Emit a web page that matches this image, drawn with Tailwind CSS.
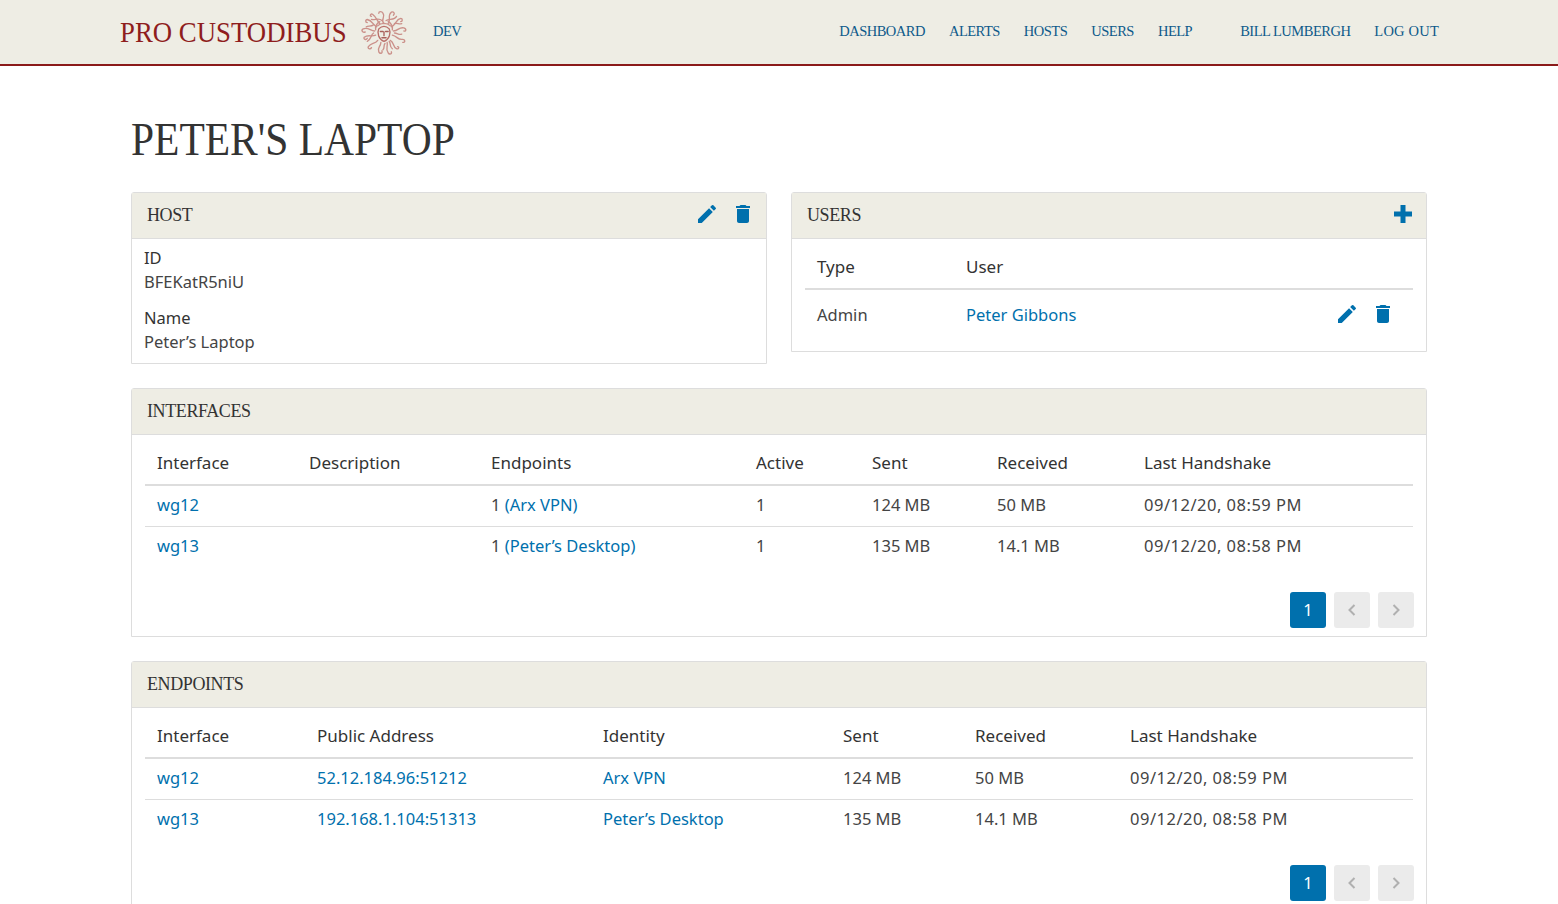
<!DOCTYPE html>
<html lang="en">
<head>
<meta charset="UTF-8" />
<title>Peter's Laptop</title>
<script src="https://cdn.jsdelivr.net/npm/@tailwindcss/browser@4"></script>
</head>
<body class="bg-white text-[#444] font-['Noto_Sans','Open_Sans',sans-serif] text-[16.5px] overflow-hidden h-[904px]">

<!-- Nav -->
<nav class="h-[66px] bg-[#eeede4] border-b-2 border-[#8b1a1a] flex items-center pl-[120px] pr-[119px] font-['Liberation_Serif',serif]">
  <a class="inline-block w-[226px] whitespace-nowrap origin-left scale-x-[0.893] text-[30px] text-[#8f1d1d] leading-none">PRO CUSTODIBUS</a>
  <svg class="ml-[14px] w-[48px] h-[48px]" viewBox="0 0 46 46" fill="none" stroke="#cb918a" stroke-width="1.3" stroke-linecap="round">
    <path d="M23 15C19 11 25 9 22 5C21 3 18 3 18 5" />
    <path d="M27 15C30 11 26 7 30 4C32 3 34 5 32 7" />
    <path d="M30 18C35 16 34 11 39 10C41 10 41 13 39 13" />
    <path d="M32 22C37 22 37 18 42 19C45 20 44 23 42 22" />
    <path d="M31 26C36 27 36 31 41 30C43 30 44 33 41 33" />
    <path d="M29 31C33 33 31 37 35 39C37 40 38 37 36 37" />
    <path d="M26 33C27 37 24 39 27 43C28 45 31 44 30 42" />
    <path d="M20 33C20 37 16 38 18 42C19 44 22 44 21 41" />
    <path d="M17 31C14 35 11 33 8 37C7 39 10 40 11 38" />
    <path d="M15 26C11 28 8 25 4 28C3 30 6 31 7 29" />
    <path d="M14 22C10 22 8 18 3 20C1 21 2 24 5 23" />
    <path d="M16 18C12 16 12 12 7 11C5 11 5 14 7 14" />
    <path d="M19 15C16 12 16 9 12 6C10 5 9 8 11 8" />
    <path d="M25 12C28 10 33 12 35 8M21 12C18 9 14 12 11 11M13 24C10 26 11 30 7 32M33 24C36 24 37 26 40 25M24 34C22 37 24 38 22 40M28 32C30 35 28 37 31 39M13 16C11 18 8 17 6 18M33 15C36 14 37 16 40 15" />
    <path d="M18 20C16 24 18 30 23 32C28 30 30 24 28 20C25 17 21 17 18 20Z" stroke="#b9706a" />
    <path d="M19.5 22.5h2.5M24.5 22.5h2.5M23 23v3.5M21 28.5h4" stroke="#a9605a" />
    <path d="M17 17C20 14 26 14 29 17M15 21C14 17 17 14 19 13M31 21C32 17 29 14 27 13" />
  </svg>
  <span class="ml-[25px] text-[#0d5a8a] text-[14.5px] tracking-[-0.5px]">DEV</span>
  <div class="ml-auto flex items-center gap-[24px] text-[#0d5a8a] text-[14.5px] tracking-[-0.5px]">
    <a>DASHBOARD</a><a>ALERTS</a><a>HOSTS</a><a>USERS</a><a>HELP</a>
    <a class="ml-[24px]">BILL LUMBERGH</a><a class="tracking-[0.2px]">LOG OUT</a>
  </div>
</nav>

<main class="px-[131px]">
  <h1 class="mt-[46px] mb-[24px] origin-left scale-x-[0.902] whitespace-nowrap text-[46px] leading-[56px] text-[#333] font-['Liberation_Serif',serif]">PETER'S LAPTOP</h1>

  <div class="grid grid-cols-2 gap-[24px] items-start mb-[24px]">
    <!-- Host -->
    <section class="border border-[#ddd] rounded-t-[3px]">
      <header class="h-[46px] pb-[1px] bg-[#eeede4] border-b border-[#ddd] flex items-center pl-[15px] pr-[11px] font-['Liberation_Serif',serif] text-[18px] tracking-[-0.4px] text-[#333]">HOST
        <span class="ml-auto flex gap-[12px] -mt-[2px]">
          <svg class="w-[24px] h-[24px]" viewBox="0 0 24 24" fill="#0070ad"><path d="M3 17.25V21h3.75L17.81 9.94l-3.75-3.75L3 17.25zM20.71 7.04a1 1 0 0 0 0-1.41l-2.34-2.34a1 1 0 0 0-1.41 0l-1.83 1.83 3.75 3.75 1.83-1.83z"/></svg>
          <svg class="w-[24px] h-[24px]" viewBox="0 0 24 24" fill="#0070ad"><path d="M6 19c0 1.1.9 2 2 2h8c1.1 0 2-.9 2-2V7H6v12zM19 4h-3.5l-1-1h-5l-1 1H5v2h14V4z"/></svg>
        </span>
      </header>
      <div class="px-[12px] pt-[6px] pb-[9px] leading-[25px]">
        <div class="text-[#333]">ID</div><div class="-mt-[1px]">BFEKatR5niU</div>
        <div class="text-[#333] mt-[11px]">Name</div><div class="-mt-[1px]">Peter’s Laptop</div>
      </div>
    </section>
    <!-- Users -->
    <section class="border border-[#ddd] rounded-t-[3px]">
      <header class="h-[46px] pb-[1px] bg-[#eeede4] border-b border-[#ddd] flex items-center pl-[15px] pr-[11px] font-['Liberation_Serif',serif] text-[18px] tracking-[-0.4px] text-[#333]">USERS
        <svg class="ml-auto -mt-[2px] w-[24px] h-[24px]" viewBox="0 0 24 24" fill="#0070ad"><path d="M9.5 3h5v6.5H21v5h-6.5V21h-5v-6.5H3v-5h6.5z"/></svg>
      </header>
      <div class="px-[13px] pb-[11px]">
        <div class="flex h-[51px] pt-[6px] items-center border-b-2 border-[#ddd] px-[12px] text-[17px] text-[#333]"><span class="w-[149px]">Type</span><span>User</span></div>
        <div class="flex h-[50px] items-center px-[12px]"><span class="w-[149px]">Admin</span><a class="text-[#0070ad]">Peter Gibbons</a>
          <span class="ml-auto mr-[6px] flex gap-[12px] -mt-[2px]">
            <svg class="w-[24px] h-[24px]" viewBox="0 0 24 24" fill="#0070ad"><path d="M3 17.25V21h3.75L17.81 9.94l-3.75-3.75L3 17.25zM20.71 7.04a1 1 0 0 0 0-1.41l-2.34-2.34a1 1 0 0 0-1.41 0l-1.83 1.83 3.75 3.75 1.83-1.83z"/></svg>
            <svg class="w-[24px] h-[24px]" viewBox="0 0 24 24" fill="#0070ad"><path d="M6 19c0 1.1.9 2 2 2h8c1.1 0 2-.9 2-2V7H6v12zM19 4h-3.5l-1-1h-5l-1 1H5v2h14V4z"/></svg>
          </span>
        </div>
      </div>
    </section>
  </div>

  <!-- Interfaces -->
  <section class="border border-[#ddd] rounded-t-[3px] mb-[24px]">
    <header class="h-[46px] pb-[1px] bg-[#eeede4] border-b border-[#ddd] flex items-center px-[15px] font-['Liberation_Serif',serif] text-[18px] tracking-[-0.4px] text-[#333]">INTERFACES</header>
    <div class="px-[13px] pb-[8px]">
      <table class="w-full table-fixed border-collapse text-left">
        <colgroup>
          <col class="w-[152px]" /><col class="w-[182px]" /><col class="w-[265px]" /><col class="w-[116px]" /><col class="w-[125px]" /><col class="w-[147px]" /><col />
        </colgroup>
        <thead>
          <tr class="h-[50px] border-b-2 border-[#ddd] text-[17px] text-[#333]">
            <th class="px-[12px] pt-[6px] font-normal">Interface</th>
            <th class="px-[12px] pt-[6px] font-normal">Description</th>
            <th class="px-[12px] pt-[6px] font-normal">Endpoints</th>
            <th class="px-[12px] pt-[6px] font-normal">Active</th>
            <th class="px-[12px] pt-[6px] font-normal">Sent</th>
            <th class="px-[12px] pt-[6px] font-normal">Received</th>
            <th class="px-[12px] pt-[6px] font-normal">Last Handshake</th>
          </tr>
        </thead>
        <tbody>
          <tr class="h-[41px] border-b border-[#ddd]">
            <td class="px-[12px]"><a class="text-[#0070ad]">wg12</a></td>
            <td class="px-[12px]"></td>
            <td class="px-[12px]">1 <a class="text-[#0070ad]">(Arx VPN)</a></td>
            <td class="px-[12px]">1</td>
            <td class="px-[12px]">124 MB</td>
            <td class="px-[12px]">50 MB</td>
            <td class="px-[12px] tracking-[0.5px]">09/12/20, 08:59 PM</td>
          </tr>
          <tr class="h-[41px]">
            <td class="px-[12px]"><a class="text-[#0070ad]">wg13</a></td>
            <td class="px-[12px]"></td>
            <td class="px-[12px]">1 <a class="text-[#0070ad]">(Peter’s Desktop)</a></td>
            <td class="px-[12px]">1</td>
            <td class="px-[12px]">135 MB</td>
            <td class="px-[12px]">14.1 MB</td>
            <td class="px-[12px] tracking-[0.5px]">09/12/20, 08:58 PM</td>
          </tr>
        </tbody>
      </table>
      <div class="mt-[25px] -mr-[1px] flex justify-end gap-[8px]">
        <a class="w-[36px] h-[36px] rounded-[3px] bg-[#0070ad] text-white flex items-center justify-center">1</a>
        <a class="w-[36px] h-[36px] rounded-[3px] bg-[#ebebeb] flex items-center justify-center"><svg class="w-[12px] h-[14px]" viewBox="0 0 12 14" fill="none" stroke="#b0b0b0" stroke-width="2"><path d="M8.5 2L3.5 7l5 5"/></svg></a>
        <a class="w-[36px] h-[36px] rounded-[3px] bg-[#ebebeb] flex items-center justify-center"><svg class="w-[12px] h-[14px]" viewBox="0 0 12 14" fill="none" stroke="#b0b0b0" stroke-width="2"><path d="M3.5 2l5 5-5 5"/></svg></a>
      </div>
    </div>
  </section>

  <!-- Endpoints -->
  <section class="border border-[#ddd] rounded-t-[3px]">
    <header class="h-[46px] pb-[1px] bg-[#eeede4] border-b border-[#ddd] flex items-center px-[15px] font-['Liberation_Serif',serif] text-[18px] tracking-[-0.4px] text-[#333]">ENDPOINTS</header>
    <div class="px-[13px] pb-[8px]">
      <table class="w-full table-fixed border-collapse text-left">
        <colgroup>
          <col class="w-[160px]" /><col class="w-[286px]" /><col class="w-[240px]" /><col class="w-[132px]" /><col class="w-[155px]" /><col />
        </colgroup>
        <thead>
          <tr class="h-[50px] border-b-2 border-[#ddd] text-[17px] text-[#333]">
            <th class="px-[12px] pt-[6px] font-normal">Interface</th>
            <th class="px-[12px] pt-[6px] font-normal">Public Address</th>
            <th class="px-[12px] pt-[6px] font-normal">Identity</th>
            <th class="px-[12px] pt-[6px] font-normal">Sent</th>
            <th class="px-[12px] pt-[6px] font-normal">Received</th>
            <th class="px-[12px] pt-[6px] font-normal">Last Handshake</th>
          </tr>
        </thead>
        <tbody>
          <tr class="h-[41px] border-b border-[#ddd]">
            <td class="px-[12px]"><a class="text-[#0070ad]">wg12</a></td>
            <td class="px-[12px]"><a class="text-[#0070ad]">52.12.184.96:51212</a></td>
            <td class="px-[12px]"><a class="text-[#0070ad]">Arx VPN</a></td>
            <td class="px-[12px]">124 MB</td>
            <td class="px-[12px]">50 MB</td>
            <td class="px-[12px] tracking-[0.5px]">09/12/20, 08:59 PM</td>
          </tr>
          <tr class="h-[41px]">
            <td class="px-[12px]"><a class="text-[#0070ad]">wg13</a></td>
            <td class="px-[12px]"><a class="text-[#0070ad]">192.168.1.104:51313</a></td>
            <td class="px-[12px]"><a class="text-[#0070ad]">Peter’s Desktop</a></td>
            <td class="px-[12px]">135 MB</td>
            <td class="px-[12px]">14.1 MB</td>
            <td class="px-[12px] tracking-[0.5px]">09/12/20, 08:58 PM</td>
          </tr>
        </tbody>
      </table>
      <div class="mt-[25px] -mr-[1px] flex justify-end gap-[8px]">
        <a class="w-[36px] h-[36px] rounded-[3px] bg-[#0070ad] text-white flex items-center justify-center">1</a>
        <a class="w-[36px] h-[36px] rounded-[3px] bg-[#ebebeb] flex items-center justify-center"><svg class="w-[12px] h-[14px]" viewBox="0 0 12 14" fill="none" stroke="#b0b0b0" stroke-width="2"><path d="M8.5 2L3.5 7l5 5"/></svg></a>
        <a class="w-[36px] h-[36px] rounded-[3px] bg-[#ebebeb] flex items-center justify-center"><svg class="w-[12px] h-[14px]" viewBox="0 0 12 14" fill="none" stroke="#b0b0b0" stroke-width="2"><path d="M3.5 2l5 5-5 5"/></svg></a>
      </div>
    </div>
  </section>
</main>
</body>
</html>
